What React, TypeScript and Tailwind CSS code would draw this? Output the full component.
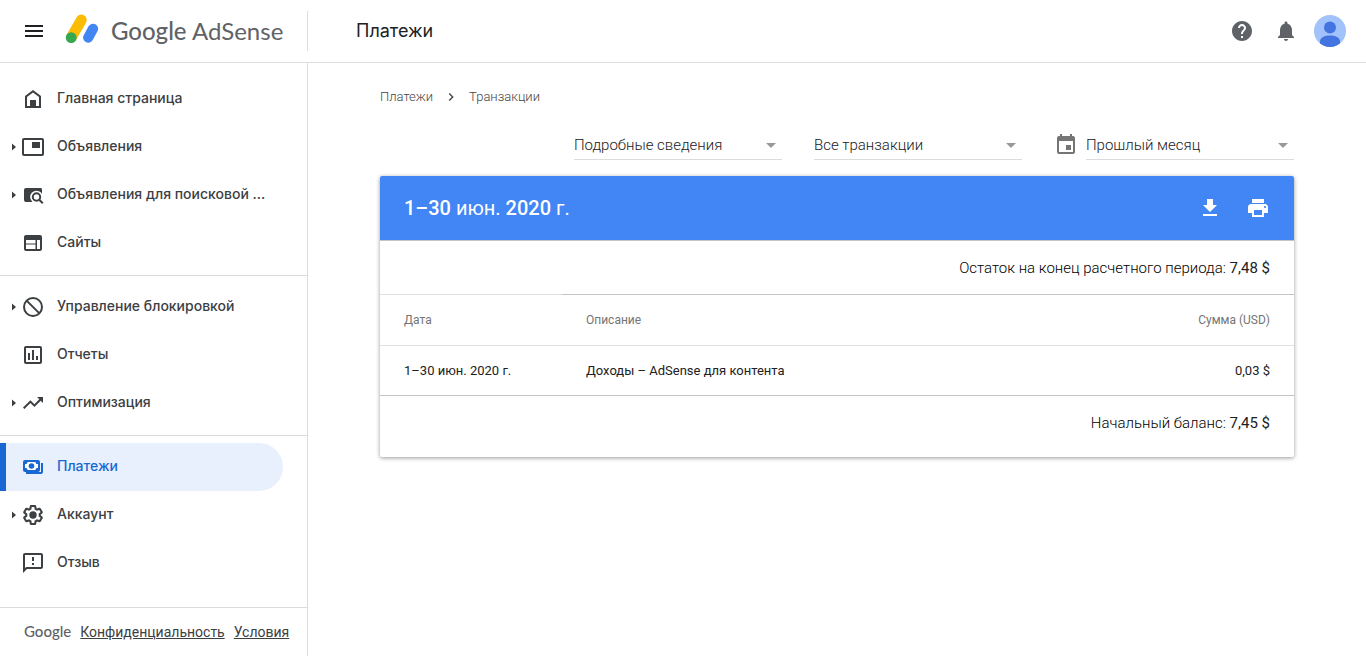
import type { ReactNode } from "react";
import {
  MdChevronRight,
  MdEvent,
  MdFileDownload,
  MdHelp,
  MdMenu,
  MdNotifications,
  MdOutlineAssessment,
  MdOutlineFeedback,
  MdPictureInPicture,
  MdPrint,
  MdTrendingUp,
} from "react-icons/md";

type NavItem = {
  label: string;
  icon: ReactNode;
  expandable?: boolean;
  active?: boolean;
};

type Transaction = {
  date: string;
  description: string;
  amount: string;
};

function HomeIcon() {
  return (
    <svg viewBox="0 0 24 24" className="size-6" fill="currentColor" aria-hidden="true">
      <path d="M12 3 4 9v12h16V9l-8-6zm6 16H6v-9l6-4.5 6 4.5v9z" />
      <path d="M9 13h6v6H9z" />
    </svg>
  );
}

function SearchAdsIcon() {
  return (
    <svg viewBox="0 0 24 24" className="size-6" fill="none" aria-hidden="true">
      <rect x="3" y="5" width="18" height="14" rx="2" fill="currentColor" />
      <circle cx="15.5" cy="14" r="6.3" fill="#fff" />
      <path d="M19 17l5 5" stroke="#fff" strokeWidth="5" />
      <path d="M18 5h1a2 2 0 0 1 2 2v3c-.6-1.2-1.6-2.2-3-2.7z" fill="currentColor" />
      <circle cx="15.5" cy="14" r="3.7" stroke="currentColor" strokeWidth="2" />
      <path d="M18.2 16.7l3.6 3.6" stroke="currentColor" strokeWidth="2" />
    </svg>
  );
}

function SitesIcon() {
  return (
    <svg viewBox="0 0 24 24" className="size-6" fill="currentColor" fillRule="evenodd" aria-hidden="true">
      <path d="M5 4h14a2 2 0 0 1 2 2v12a2 2 0 0 1-2 2H5a2 2 0 0 1-2-2V6c0-1.1.9-2 2-2zm0 5v3.5h9.5V9zm0 4.500V18h9.500v-4.500zM16 9v9h3V9z" />
    </svg>
  );
}

function BlockIcon() {
  return (
    <svg viewBox="0 0 24 24" className="size-6" fill="none" stroke="currentColor" strokeWidth="2" aria-hidden="true">
      <circle cx="12" cy="12" r="9" />
      <path d="M5.6 5.6l12.8 12.8" />
    </svg>
  );
}

function PaymentsIcon() {
  return (
    <svg viewBox="0 0 24 24" className="size-6" fill="none" aria-hidden="true">
      <rect x="2" y="5" width="17" height="12" rx="2" fill="currentColor" />
      <path d="M6.500 7h8a2 2 0 0 0 2.500 2v4a2 2 0 0 0-2.500 2h-8A2 2 0 0 0 4 13V9a2 2 0 0 0 2.500-2z" fill="#fff" />
      <circle cx="10.5" cy="11" r="2.8" fill="currentColor" />
      <path d="M21 8v9a1 1 0 0 1-1 1H5" stroke="currentColor" strokeWidth="2" />
    </svg>
  );
}

function AccountIcon() {
  return (
    <svg viewBox="0 0 24 24" className="size-6" fill="none" aria-hidden="true">
      <path
        transform="translate(1.2 1.2) scale(.9)"
        stroke="currentColor"
        strokeWidth="2.3"
        d="M19.43 12.98c.04-.32.07-.64.07-.98 0-.34-.03-.66-.07-.98l2.11-1.65c.19-.15.24-.42.12-.64l-2-3.46c-.09-.16-.26-.25-.44-.25-.06 0-.12.01-.17.03l-2.49 1c-.52-.4-1.08-.73-1.69-.98l-.38-2.65C14.46 2.18 14.25 2 14 2h-4c-.25 0-.46.18-.49.42l-.38 2.65c-.61.25-1.17.59-1.69.98l-2.49-1c-.06-.02-.12-.03-.18-.03-.17 0-.34.09-.43.25l-2 3.46c-.13.22-.07.49.12.64l2.11 1.65c-.04.32-.07.65-.07.98 0 .33.03.66.07.98l-2.11 1.65c-.19.15-.24.42-.12.64l2 3.46c.09.16.26.25.44.25.06 0 .12-.01.17-.03l2.49-1c.52.4 1.08.73 1.69.98l.38 2.65c.03.24.24.42.49.42h4c.25 0 .46-.18.49-.42l.38-2.65c.61-.25 1.17-.59 1.69-.98l2.49 1c.06.02.12.03.18.03.17 0 .34-.09.43-.25l2-3.46c.12-.22.07-.49-.12-.64z"
      />
      <circle cx="12" cy="12" r="3.7" fill="currentColor" />
    </svg>
  );
}

function AdSenseLogo() {
  return (
    <svg viewBox="0 0 34 34" className="size-[34px]" fill="none" strokeLinecap="round" aria-hidden="true">
      <path d="M16.3 6L6.4 23.4" stroke="#fbbc04" strokeWidth="10.8" />
      <path d="M28 14.800L23.200 23.600" stroke="#4285f4" strokeWidth="10.200" />
      <circle cx="6.2" cy="23.6" r="5.4" fill="#34a853" />
    </svg>
  );
}

function Avatar() {
  return (
    <svg viewBox="0 0 32 32" className="size-8 rounded-full" aria-hidden="true">
      <rect width="32" height="32" fill="#a1c2fa" />
      <circle cx="16" cy="12.5" r="6" fill="#4374e0" />
      <path d="M6 26.5c0-4.2 5-6 10-6s10 1.800 10 6V32H6z" fill="#4374e0" />
    </svg>
  );
}

const navGroups: NavItem[][] = [
  [
    { label: "Главная страница", icon: <HomeIcon /> },
    { label: "Объявления", icon: <MdPictureInPicture />, expandable: true },
    { label: "Объявления для поисковой ...", icon: <SearchAdsIcon />, expandable: true },
    { label: "Сайты", icon: <SitesIcon /> },
  ],
  [
    { label: "Управление блокировкой", icon: <BlockIcon />, expandable: true },
    { label: "Отчеты", icon: <MdOutlineAssessment /> },
    { label: "Оптимизация", icon: <MdTrendingUp />, expandable: true },
  ],
  [
    { label: "Платежи", icon: <PaymentsIcon />, active: true },
    { label: "Аккаунт", icon: <AccountIcon />, expandable: true },
    { label: "Отзыв", icon: <MdOutlineFeedback /> },
  ],
];

const transactions: Transaction[] = [
  { date: "1–30 июн. 2020 г.", description: "Доходы – AdSense для контента", amount: "0,03 $" },
];

function NavLink({ label, icon, expandable, active }: NavItem) {
  return (
    <a
      href="#"
      aria-current={active ? "page" : undefined}
      className={
        active
          ? "mr-6 flex h-12 items-center rounded-r-full border-l-6 border-[#1967d2] bg-[#e8f0fe] pl-[6px] text-[#1967d2]"
          : "mr-6 flex h-12 items-center pl-3 text-[#3c4043]"
      }
    >
      <span className="flex w-[9px] shrink-0">
        {expandable && (
          <svg viewBox="0 0 4 8" className="h-2 w-1" fill="currentColor" aria-hidden="true">
            <path d="M0 0.5v7l4-3.5z" />
          </svg>
        )}
      </span>
      <span className="mr-3 shrink-0 text-2xl">{icon}</span>
      <span className="pb-[2px] font-['Inter',sans-serif] text-sm font-medium whitespace-nowrap">{label}</span>
    </a>
  );
}

function FilterSelect({ label, value }: { label: string; value: string }) {
  return (
    <div className="relative w-52">
      <select
        aria-label={label}
        className="h-[30px] w-full appearance-none border-b border-[#dcdcdc] bg-white pt-[2px] text-[15px] font-light text-[#212121]"
      >
        <option>{value}</option>
      </select>
      <svg
        viewBox="0 0 10 5"
        className="pointer-events-none absolute top-[13px] right-[6px] h-[5px] w-[10px]"
        fill="#999"
        aria-hidden="true"
      >
        <path d="M0 0h10L5 5z" />
      </svg>
    </div>
  );
}

function BalanceRow({ label, value }: { label: string; value: string }) {
  return (
    <p className="flex h-[54px] items-center justify-end border-t border-[#c4c4c4] px-6 pt-px text-[15px] text-[#212121]">
      <span className="font-light text-black">{label}:</span>&nbsp;{value}
    </p>
  );
}

export default function App() {
  return (
    <div className="flex min-h-screen flex-col bg-white font-['Roboto',sans-serif]">
      <header className="flex h-[63px] items-center border-b border-[#dadce0]">
        <div className="flex h-10 w-[308px] shrink-0 items-center border-r border-[#dadce0] pl-[22px]">
          <button type="button" aria-label="Меню" className="text-2xl text-[#202124]">
            <MdMenu />
          </button>
          <a href="#" className="ml-[19px] flex items-center gap-3">
            <AdSenseLogo />
            <span className="font-['Lato',sans-serif] text-2xl whitespace-nowrap text-[#5f6368]">
              <span className="font-medium">Google</span> AdSense
            </span>
          </a>
        </div>
        <h1 className="ml-12 font-['Inter',sans-serif] text-lg text-[#202124]">Платежи</h1>
        <div className="mr-5 ml-auto flex items-center gap-4 text-2xl text-[#5f6368]">
          <button type="button" aria-label="Справка" className="mr-1">
            <MdHelp />
          </button>
          <button type="button" aria-label="Уведомления">
            <MdNotifications />
          </button>
          <button type="button" aria-label="Аккаунт Google">
            <Avatar />
          </button>
        </div>
      </header>

      <div className="flex flex-1">
        <aside className="flex w-[308px] shrink-0 flex-col border-r border-[#dadce0]">
          <nav className="pt-1">
            {navGroups.map((group, i) => (
              <div
                key={i}
                className={i === 0 ? "pt-2 pb-2" : "border-t border-[#dadce0] pt-[7px] pb-2"}
              >
                {group.map((item) => (
                  <NavLink key={item.label} {...item} />
                ))}
              </div>
            ))}
          </nav>
          <footer className="mt-auto flex h-[49px] items-center border-t border-[#dadce0] pl-6 text-sm whitespace-nowrap text-[#3c4043]">
            <span className="font-['Lato',sans-serif] text-[15px] font-medium text-[#5f6368]">Google</span>
            <a href="#" className="ml-[9px] underline">
              Конфиденциальность
            </a>
            <a href="#" className="ml-[9px] underline">
              Условия
            </a>
          </footer>
        </aside>

        <main className="min-w-0 flex-1 px-[72px] pt-6">
          <nav className="flex h-5 items-center text-[13px] font-light text-[#444]">
            <a href="#">Платежи</a>
            <MdChevronRight className="mx-[10px] text-base" />
            <a href="#">Транзакции</a>
          </nav>

          <div className="mt-[23px] flex justify-end gap-8">
            <FilterSelect label="Вид" value="Подробные сведения" />
            <FilterSelect label="Тип транзакций" value="Все транзакции" />
            <div className="flex items-center gap-2">
              <MdEvent className="text-2xl text-[#757575]" />
              <FilterSelect label="Период" value="Прошлый месяц" />
            </div>
          </div>

          <section className="mt-4 overflow-hidden rounded-xs shadow-[0_1px_4px_rgba(0,0,0,0.4)]">
            <div className="flex h-16 items-center bg-[#4285f4] px-6 text-white">
              <h2 className="text-xl font-medium">
                1–30 <span className="font-normal">июн.</span> 2020 <span className="font-normal">г.</span>
              </h2>
              <div className="ml-auto flex gap-6 text-2xl">
                <button type="button" aria-label="Скачать">
                  <MdFileDownload />
                </button>
                <button type="button" aria-label="Печать">
                  <MdPrint />
                </button>
              </div>
            </div>
            <BalanceRow label="Остаток на конец расчетного периода" value="7,48 $" />
            <table className="w-full border-separate border-spacing-0 text-left">
              <thead className="text-xs text-[#757575]">
                <tr className="h-[51px]">
                  <th className="w-[182px] border-t border-[#e0e0e0] pl-6 font-normal">Дата</th>
                  <th className="border-t border-[#c4c4c4] pl-6 font-normal">Описание</th>
                  <th className="border-t border-[#c4c4c4] pr-6 text-right font-normal">Сумма (USD)</th>
                </tr>
              </thead>
              <tbody className="text-[13px] text-[#212121]">
                {transactions.map((item) => (
                  <tr key={item.description} className="h-[50px]">
                    <td className="border-t border-[#e0e0e0] pl-6">{item.date}</td>
                    <td className="border-t border-[#e0e0e0] pl-6">{item.description}</td>
                    <td className="border-t border-[#e0e0e0] pr-6 text-right">{item.amount}</td>
                  </tr>
                ))}
              </tbody>
            </table>
            <div className="pb-2">
              <BalanceRow label="Начальный баланс" value="7,45 $" />
            </div>
          </section>
        </main>
      </div>
    </div>
  );
}
